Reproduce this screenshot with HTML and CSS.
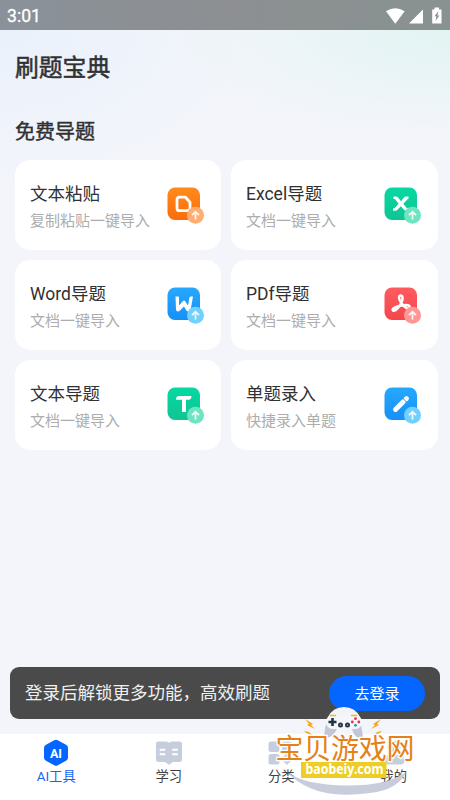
FILE: index.html
```html
<!DOCTYPE html>
<html lang="zh-CN">
<head>
<meta charset="utf-8">
<title>刷题宝典</title>
<link rel="stylesheet" href="styles.css">
</head>
<body>
<svg width="0" height="0" class="defs">
  <defs>
    <linearGradient id="orange" x1="0" y1="0" x2="0" y2="1"><stop stop-color="#ff8a1c"/><stop offset="1" stop-color="#fb6c0c"/></linearGradient>
    <linearGradient id="green" x1="0" y1="0" x2="0" y2="1"><stop stop-color="#06d8a2"/><stop offset="1" stop-color="#10c593"/></linearGradient>
    <linearGradient id="blue" x1="0" y1="0" x2="0" y2="1"><stop stop-color="#26a8ff"/><stop offset="1" stop-color="#1790f5"/></linearGradient>
    <linearGradient id="red" x1="0" y1="0" x2="0" y2="1"><stop stop-color="#ff5b5e"/><stop offset="1" stop-color="#f4474d"/></linearGradient>
    <path id="arrow" d="M28.500 32.500v-7.500M25 28.200l3.500-3.500 3.500 3.500" fill="none" stroke="#fff" stroke-opacity=".9" stroke-width="1.700"/>
  </defs>
</svg>
<div class="screen">
  <header class="status">
    <span>3:01</span>
    <svg width="60" height="20" viewBox="0 0 60 20" fill="#fff">
      <path d="M1 5.200Q10.200-.8 19.700 5.200L10.300 17.700Z"/>
      <path d="M24 17.500L38 3.500V17.500Z"/>
      <path d="M49.500 3.500V1.500h4.500v2h2.500V17.500h-9.300V3.500Z"/>
      <path d="M53.500 5l-4 5.300h2L50.500 15l3.900-5.500h-2Z" fill="#888c8d"/>
    </svg>
  </header>
  <main>
    <h1>刷题宝典</h1>
    <h2>免费导题</h2>
    <section class="cards">
      <article class="card"><div><h3>文本粘贴</h3><p>复制粘贴一键导入</p></div>
        <svg class="icon" viewBox="0 0 37 37"><rect x=".5" y=".5" width="32.500" height="32.500" rx="7.500" fill="url(#orange)"/><path d="M12.500 10.200h6l4.500 5v6q0 2.500-2.500 2.500h-8q-2.500 0-2.500-2.500v-8.500q0-2.500 2.500-2.500Z" fill="none" stroke="#fff" stroke-width="2.800" stroke-linejoin="round"/><circle cx="28.500" cy="28.300" r="8.500" fill="#ffad70"/><use href="#arrow"/></svg></article>
      <article class="card"><div><h3>Excel导题</h3><p>文档一键导入</p></div>
        <svg class="icon" viewBox="0 0 37 37"><rect x=".5" y=".5" width="32.500" height="32.500" rx="7.500" fill="url(#green)"/><path d="M9.500 9.500H12Q13.300 9.500 14 10.500L17 14.300 20 10.500Q20.800 9.500 22 9.500H24.500V12H23.800L19.300 16.800 23 21.300H25V23.800H22Q20.800 23.800 20 22.800L16.800 19.300 13.500 22.800Q12.700 23.800 11.500 23.800H9V21.300H10.500L14.600 16.800 11 12H9.500Z" fill="#fff"/><circle cx="28.500" cy="28.300" r="8.500" fill="#6ee4c1"/><use href="#arrow"/></svg></article>
      <article class="card"><div><h3>Word导题</h3><p>文档一键导入</p></div>
        <svg class="icon" viewBox="0 0 37 37"><rect x=".5" y=".5" width="32.500" height="32.500" rx="7.500" fill="url(#blue)"/><path d="M8.500 9.500H11Q12 9.500 12 10.500V18.500L16 14Q17 13 18 14L21 18.500 22.500 10.500Q22.700 9.500 24 9.500H26L23.800 22Q23.300 24.500 21.500 24.500 20 24.500 19 23L17 19.500 13 23.500Q12 24.500 10.800 24.500 9 24.500 9 22.500Z" fill="#fff"/><circle cx="28.500" cy="28.300" r="8.500" fill="#70d1ff"/><use href="#arrow"/></svg></article>
      <article class="card"><div><h3>PDf导题</h3><p>文档一键导入</p></div>
        <svg class="icon" viewBox="0 0 37 37"><rect x=".5" y=".5" width="32.500" height="32.500" rx="7.500" fill="url(#red)"/><path d="M17 15.500C14.500 12 14.500 8.500 16.500 8.500S19.500 11 17.500 15.500C15 20.500 11 25 9 23.500S11.500 19.500 17.500 18.500 26 18 25.500 20.500 21 21.500 17 15.500Z" fill="none" stroke="#fff" stroke-width="2.500" stroke-linejoin="round"/><circle cx="28.500" cy="28.300" r="8.500" fill="#ff9595"/><use href="#arrow"/></svg></article>
      <article class="card"><div><h3>文本导题</h3><p>文档一键导入</p></div>
        <svg class="icon" viewBox="0 0 37 37"><rect x=".5" y=".5" width="32.500" height="32.500" rx="7.500" fill="url(#green)"/><path d="M9 12.700q0-3.700 3-3.700h12.500q0 3.700-3 3.700h-2.500V25h-4V12.700Z" fill="#fff"/><circle cx="28.500" cy="28.300" r="8.500" fill="#6ee4c1"/><use href="#arrow"/></svg></article>
      <article class="card"><div><h3>单题录入</h3><p>快捷录入单题</p></div>
        <svg class="icon" viewBox="0 0 37 37"><rect x=".5" y=".5" width="32.500" height="32.500" rx="7.500" fill="url(#blue)"/><path d="M11.500 22.500l8-8M22 12l.5-.5" fill="none" stroke="#fff" stroke-width="4.800" stroke-linecap="round"/><path d="M18 10.500l5.500 5.500" stroke="#209eff" stroke-width="1"/><circle cx="28.500" cy="28.300" r="8.500" fill="#70d1ff"/><use href="#arrow"/></svg></article>
    </section>
  </main>
  <aside class="banner"><span>登录后解锁更多功能，高效刷题</span><button>去登录</button></aside>
  <nav class="tabs">
    <div class="tab active"><svg width="28" height="28" viewBox="0 0 28 28"><path d="M12.200 1.300q1.800-1 3.600 0l8.200 4.400q2 1.100 2 3.300v9.500q0 2.200-2 3.300l-8.200 4.500q-1.800 1-3.600 0L4 21.800q-2-1.100-2-3.300V9q0-2.200 2-3.300Z" fill="#0565ff"/><text x="14" y="18.500" text-anchor="middle" class="ai">AI</text></svg><span>AI工具</span></div>
    <div class="tab"><svg width="28" height="28" viewBox="0 0 28 28"><path d="M3.500 2.500H11q2.500 0 3 1.500 .5-1.500 3-1.500h7.500q2.500 0 2.500 2.500v15.500q0 2.500-2.500 2.500H18l-4 2.800-4-2.800H3.500Q1 23 1 20.500V5q0-2.500 2.500-2.500Z" fill="#c6cedd"/><path d="M5.500 10.700h4M5.500 15.200h4M18 10.700h4M18 15.200h4" stroke="#fff" stroke-width="2" stroke-linecap="round"/></svg><span>学习</span></div>
    <div class="tab"><svg width="28" height="28" viewBox="0 0 28 28" fill="#c6cedd"><rect x="1.500" y="2.500" width="11" height="10.500" rx="2.500"/><rect x="15" y="2.500" width="10" height="10.500" rx="2.500"/><rect x="1.500" y="15" width="11" height="10.500" rx="2.500"/><path d="M20 14l6 6-6 6-6-6Z"/></svg><span>分类</span></div>
    <div class="tab"><svg width="28" height="28" viewBox="0 0 28 28" fill="#c6cedd"><circle cx="14" cy="8" r="6.500"/><rect x="3" y="16" width="22" height="9.500" rx="4.500"/></svg><span>我的</span></div>
  </nav>
  <svg class="watermark" width="146" height="94" viewBox="272 704 146 94">
    <path d="M287 772Q305 785 346 785.500T406 772Q398 790 370 793Q332 798 310 788Q296 782 287 772Z" fill="#c9ccdb"/>
    <path d="M328 717Q333 707 344 707T360 717Z" fill="#f3f4f7"/>
    <path d="M324 738Q325 718 333 716H354Q361 716 363 738Q355 740 352 729H337Q332 739 324 738Z" fill="#c3c6d6"/>
    <path d="M333 735Q344 724 354 735V740H333Z" fill="#f6f6f8"/>
    <rect x="326" y="715" width="36" height="14" rx="6.500" fill="#f5f6f9"/>
    <path d="M330 715.500h6M351 715.500h6" stroke="#edb33b" stroke-width="1.500"/>
    <path d="M332.500 718v8M328.500 722h8" stroke="#203448" stroke-width="2.600"/>
    <circle cx="340.500" cy="725" r="2.500" fill="#263344"/><circle cx="347.500" cy="725" r="2.500" fill="#263344"/><circle cx="340.500" cy="725" r=".8" fill="#90b5d5"/><circle cx="347.500" cy="725" r=".8" fill="#90b5d5"/>
    <circle cx="355.500" cy="718.700" r="1.400" fill="#e33545"/><circle cx="352.300" cy="722" r="1.400" fill="#e33545"/><circle cx="358.800" cy="722" r="1.400" fill="#e33545"/><circle cx="355.500" cy="725.300" r="1.400" fill="#2097ad"/>
    <path d="M305 719l8 5-2 1 4 4-8-4 2-1ZM381 719l-8 5 2 1-4 4 8-4-2-1ZM304 731l5 1 3 3-6-2ZM382 731l-5 1-3 3 6-2Z" fill="#f6a51b"/>
    <text x="275.500" y="759" class="mark" textLength="139">宝贝游戏网</text>
    <rect x="301" y="762" width="85.500" height="16" fill="#edce24"/>
    <text x="305.500" y="774.300" class="site" textLength="78" lengthAdjust="spacingAndGlyphs">baobeiy.com</text>
  </svg>
</div>
</body>
</html>
```
FILE: styles.css
```css
* { box-sizing: border-box; }
body { margin: 0; font-family: Roboto, "Noto Sans CJK SC", sans-serif; color: #303133; }
h1, h2, h3, p { margin: 0; font-weight: 400; }
.defs { position: absolute; }
.screen {
  position: relative;
  width: 450px;
  height: 800px;
  overflow: hidden;
  display: flex;
  flex-direction: column;
  background: radial-gradient(ellipse 270px 105px at 100% 30px, #e2f4f3, transparent), radial-gradient(ellipse 270px 160px at 0 30px, #eaf1fc, transparent), #f3f5fa;
}
.status {
  height: 30px;
  flex: none;
  display: flex;
  align-items: center;
  justify-content: space-between;
  padding: 1px 5px 0 7px;
  background: linear-gradient(90deg, #8a9199, #8d8f92 50%, #899291);
  color: #fff;
  font-size: 17.600px;
}
.status span { -webkit-text-stroke: .3px #fff; }
.status svg { display: block; }
main { flex: 1; padding: 0 12px 0 15px; }
h1 { margin-top: 20px; font-size: 23.800px; line-height: 36px; -webkit-text-stroke: .5px #303133; }
h2 { margin-top: 31px; font-size: 20px; line-height: 30px; -webkit-text-stroke: .45px #303133; }
.cards { display: grid; grid-template-columns: 206px 207px; grid-auto-rows: 90px; gap: 10px; margin-top: 13px; }
.card { display: flex; align-items: center; justify-content: space-between; padding: 0 17px 0 15px; background: #fff; border-radius: 15px; }
.card h3 { margin-top: 6px; font-size: 17.500px; line-height: 27px; }
.card p { font-size: 15px; line-height: 27px; color: #adadad; }
.icon { width: 37px; height: 37px; }
.banner {
  display: flex;
  align-items: center;
  justify-content: space-between;
  height: 52px;
  margin: 0 10px 15px;
  padding: 0 15px;
  border-radius: 9px;
  background: #4a4a4a;
  color: #f0f0f0;
  font-size: 17.500px;
}
.banner span { padding-bottom: 3px; }
.banner button { width: 96px; height: 35px; padding: 0 0 2px; border: 0; border-radius: 18px; background: #0565ff; color: #fff; font: inherit; font-size: 15px; }
.tabs { flex: none; display: grid; grid-template-columns: repeat(4, 1fr); height: 66px; background: #fff; }
.tab { display: flex; flex-direction: column; align-items: center; padding-top: 5px; font-size: 13.300px; line-height: 20px; color: #404145; }
.tab svg { flex: none; }
.active { color: #1565ef; }
.ai { font-size: 12.500px; font-weight: 700; fill: #fff; }
.watermark { position: absolute; left: 272px; top: 704px; }
.mark { font-size: 28px; fill: #e58118; stroke: #fff; stroke-width: 2.500px; paint-order: stroke; }
.site { font: 700 14px "Noto Sans", sans-serif; fill: #fff; }
```
